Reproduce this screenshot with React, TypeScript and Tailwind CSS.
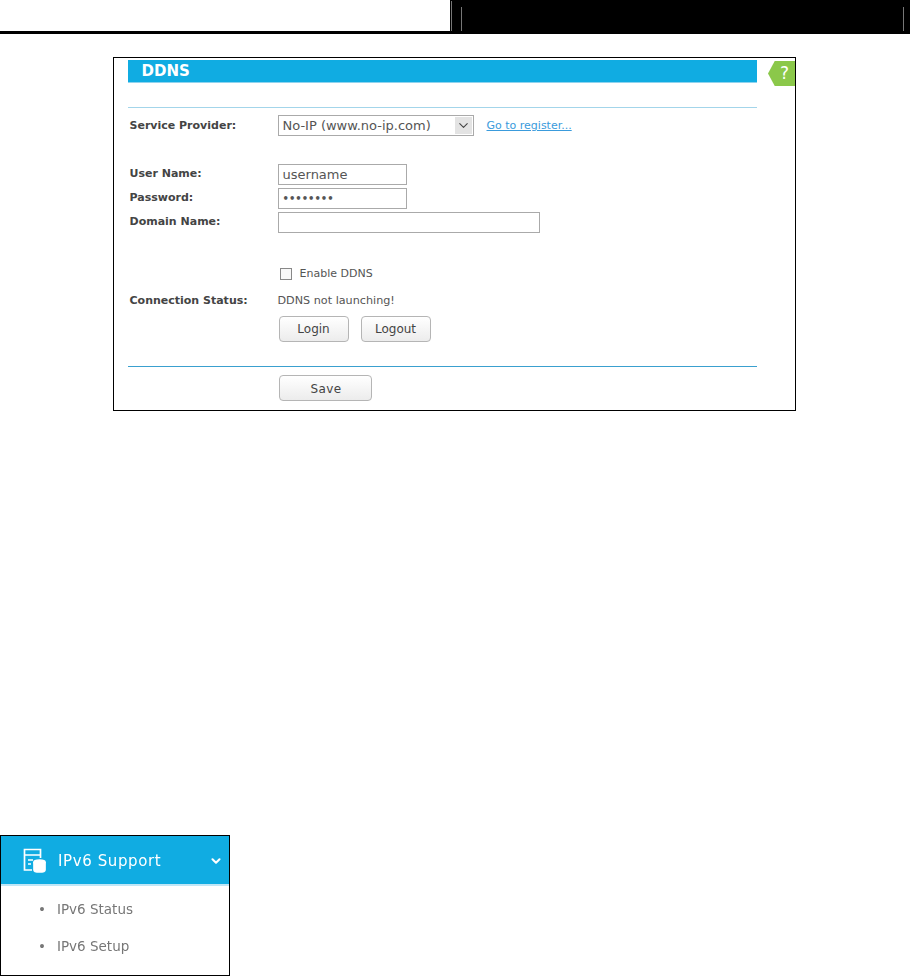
import { ChevronDown } from 'lucide-react'

const font = { fontFamily: '"DejaVu Sans", sans-serif' }

function Label({ children }: { children: React.ReactNode }) {
  return <div className="w-[150px] shrink-0 pl-[2px] text-[11px] font-bold text-[#444]">{children}</div>
}

function Btn({ children, w }: { children: React.ReactNode; w: string }) {
  return (
    <button className={`h-[26px] ${w} rounded-[4px] border border-[#b5b5b5] bg-gradient-to-b from-white to-[#ececec] text-[12px] text-[#444]`}>
      {children}
    </button>
  )
}

export default function App() {
  return (
    <div className="relative h-[976px] w-[910px] overflow-hidden bg-white" style={font}>
      {/* page header */}
      <div className="flex h-[34px]">
        <div className="flex w-[450px] flex-col justify-end">
          <div className="h-[3px] bg-black" />
        </div>
        <div className="relative flex h-[34px] flex-1 items-end bg-black pb-[3px]">
          <div className="ml-[1px] h-[30px] w-px bg-[#777]" />
          <div className="ml-[9px] h-[24px] w-px bg-[#777]" />
          <div className="ml-auto mr-[6px] h-[24px] w-px bg-[#777]" />
        </div>
      </div>

      {/* DDNS panel */}
      <div className="relative ml-[113px] mt-[23px] h-[354px] w-[683px] overflow-hidden border-[1.5px] border-black pl-[13.5px] pt-[2px]">
        <div className="w-[629px]">
          <div className="flex h-[23px] items-center border-b border-[#8fd3ee] bg-[#10ace2] pl-[14px] pt-px text-[15px] font-bold text-white">DDNS</div>
          <div className="mt-[24px] h-px bg-[#a3d5ea]" />

          <div className="mt-[7px] flex h-[21px] items-center">
            <div className="mt-[2px] flex items-center">
              <Label>Service Provider:</Label>
            </div>
            <div className="flex h-[21px] w-[196px] items-center justify-between border border-[#aaa] pl-[4px] pr-[1px] text-[13px] text-[#555]">
              No-IP (www.no-ip.com)
              <span className="flex h-[17px] w-[17px] items-center justify-center bg-[#e3e3e3]">
                <ChevronDown size={15} strokeWidth={1.75} className="text-[#444]" />
              </span>
            </div>
            <a className="ml-[13px] mt-[2px] text-[11px] text-[#3a9bdc] underline">Go to register...</a>
          </div>

          <div className="mt-[28px] flex h-[21px] items-center">
            <Label>User Name:</Label>
            <div className="flex h-[21px] w-[129px] items-center border border-[#aaa] pl-[4px] text-[13px] text-[#555]">username</div>
          </div>
          <div className="mt-[3px] flex h-[21px] items-center">
            <Label>Password:</Label>
            <div className="flex h-[21px] w-[129px] items-center border border-[#aaa] pl-[4px] text-[10px] font-bold text-[#555]">••••••••</div>
          </div>
          <div className="mt-[3px] flex h-[21px] items-center">
            <Label>Domain Name:</Label>
            <div className="h-[21px] w-[262px] border border-[#aaa]" />
          </div>

          <div className="mt-[33px] flex h-[16px] items-center">
            <div className="w-[150px] shrink-0" />
            <span className="ml-[2px] h-[12px] w-[12px] border border-[#888] bg-[#f8f8f8]" />
            <span className="ml-[8px] text-[11px] text-[#555]">Enable DDNS</span>
          </div>
          <div className="mt-[11px] flex h-[16px] items-center">
            <Label>Connection Status:</Label>
            <span className="text-[11.2px] text-[#555]">DDNS not launching!</span>
          </div>
          <div className="mt-[7px] flex pl-[151px]">
            <div className="flex gap-[12px]">
              <Btn w="w-[70px]">Login</Btn>
              <Btn w="w-[70px]">Logout</Btn>
            </div>
          </div>

          <div className="mt-[24px] h-px bg-[#3aa0cf]" />
          <div className="mt-[8px] pl-[151px]">
            <Btn w="w-[93px]"><span className="relative left-px top-px tracking-[0.4px]">Save</span></Btn>
          </div>
        </div>

        {/* help tab */}
        <div className="absolute right-0 top-[3px] flex h-[25px] w-[27px] items-center justify-center bg-[#8bc84a] pl-[6px] text-[17px] text-white [clip-path:polygon(25%_0,100%_0,100%_100%,25%_100%,0_50%)]">?</div>
      </div>

      {/* IPv6 menu crop */}
      <div className="absolute bottom-0 left-0 h-[141px] w-[230px] overflow-hidden border border-black bg-white">
        <div className="flex h-[50px] items-center border-b-2 border-[#bfe6f6] bg-[#10ace2] pl-[22px] text-white">
          <svg className="blur-[0.4px]" width="23" height="25" viewBox="0 0 23 25" fill="none" stroke="white" strokeWidth="1.7">
            <path d="M9 22H1.5V1.5h16V10" />
            <path d="M1.5 7h16M5 12h5M5 16h3" />
            <ellipse cx="16.5" cy="14" rx="5.5" ry="2" fill="white" />
            <path d="M11 14v8c0 1 2.5 2 5.5 2s5.5-1 5.5-2v-8" fill="white" />
          </svg>
          <span className="ml-[12px] mt-[3px] text-[15px] font-medium tracking-[0.6px] blur-[0.4px]">IPv6 Support</span>
          <ChevronDown size={14} strokeWidth={3.5} className="ml-auto mr-[6px] mt-[2px] blur-[0.3px]" />
        </div>
        <ul className="pl-[37px] pt-[13px] text-[13.5px] text-[#777] blur-[0.5px]">
          <li className="flex h-[37px] items-start gap-[11px]"><span>•</span>IPv6 Status</li>
          <li className="flex h-[37px] items-start gap-[11px]"><span>•</span>IPv6 Setup</li>
        </ul>
      </div>
    </div>
  )
}
